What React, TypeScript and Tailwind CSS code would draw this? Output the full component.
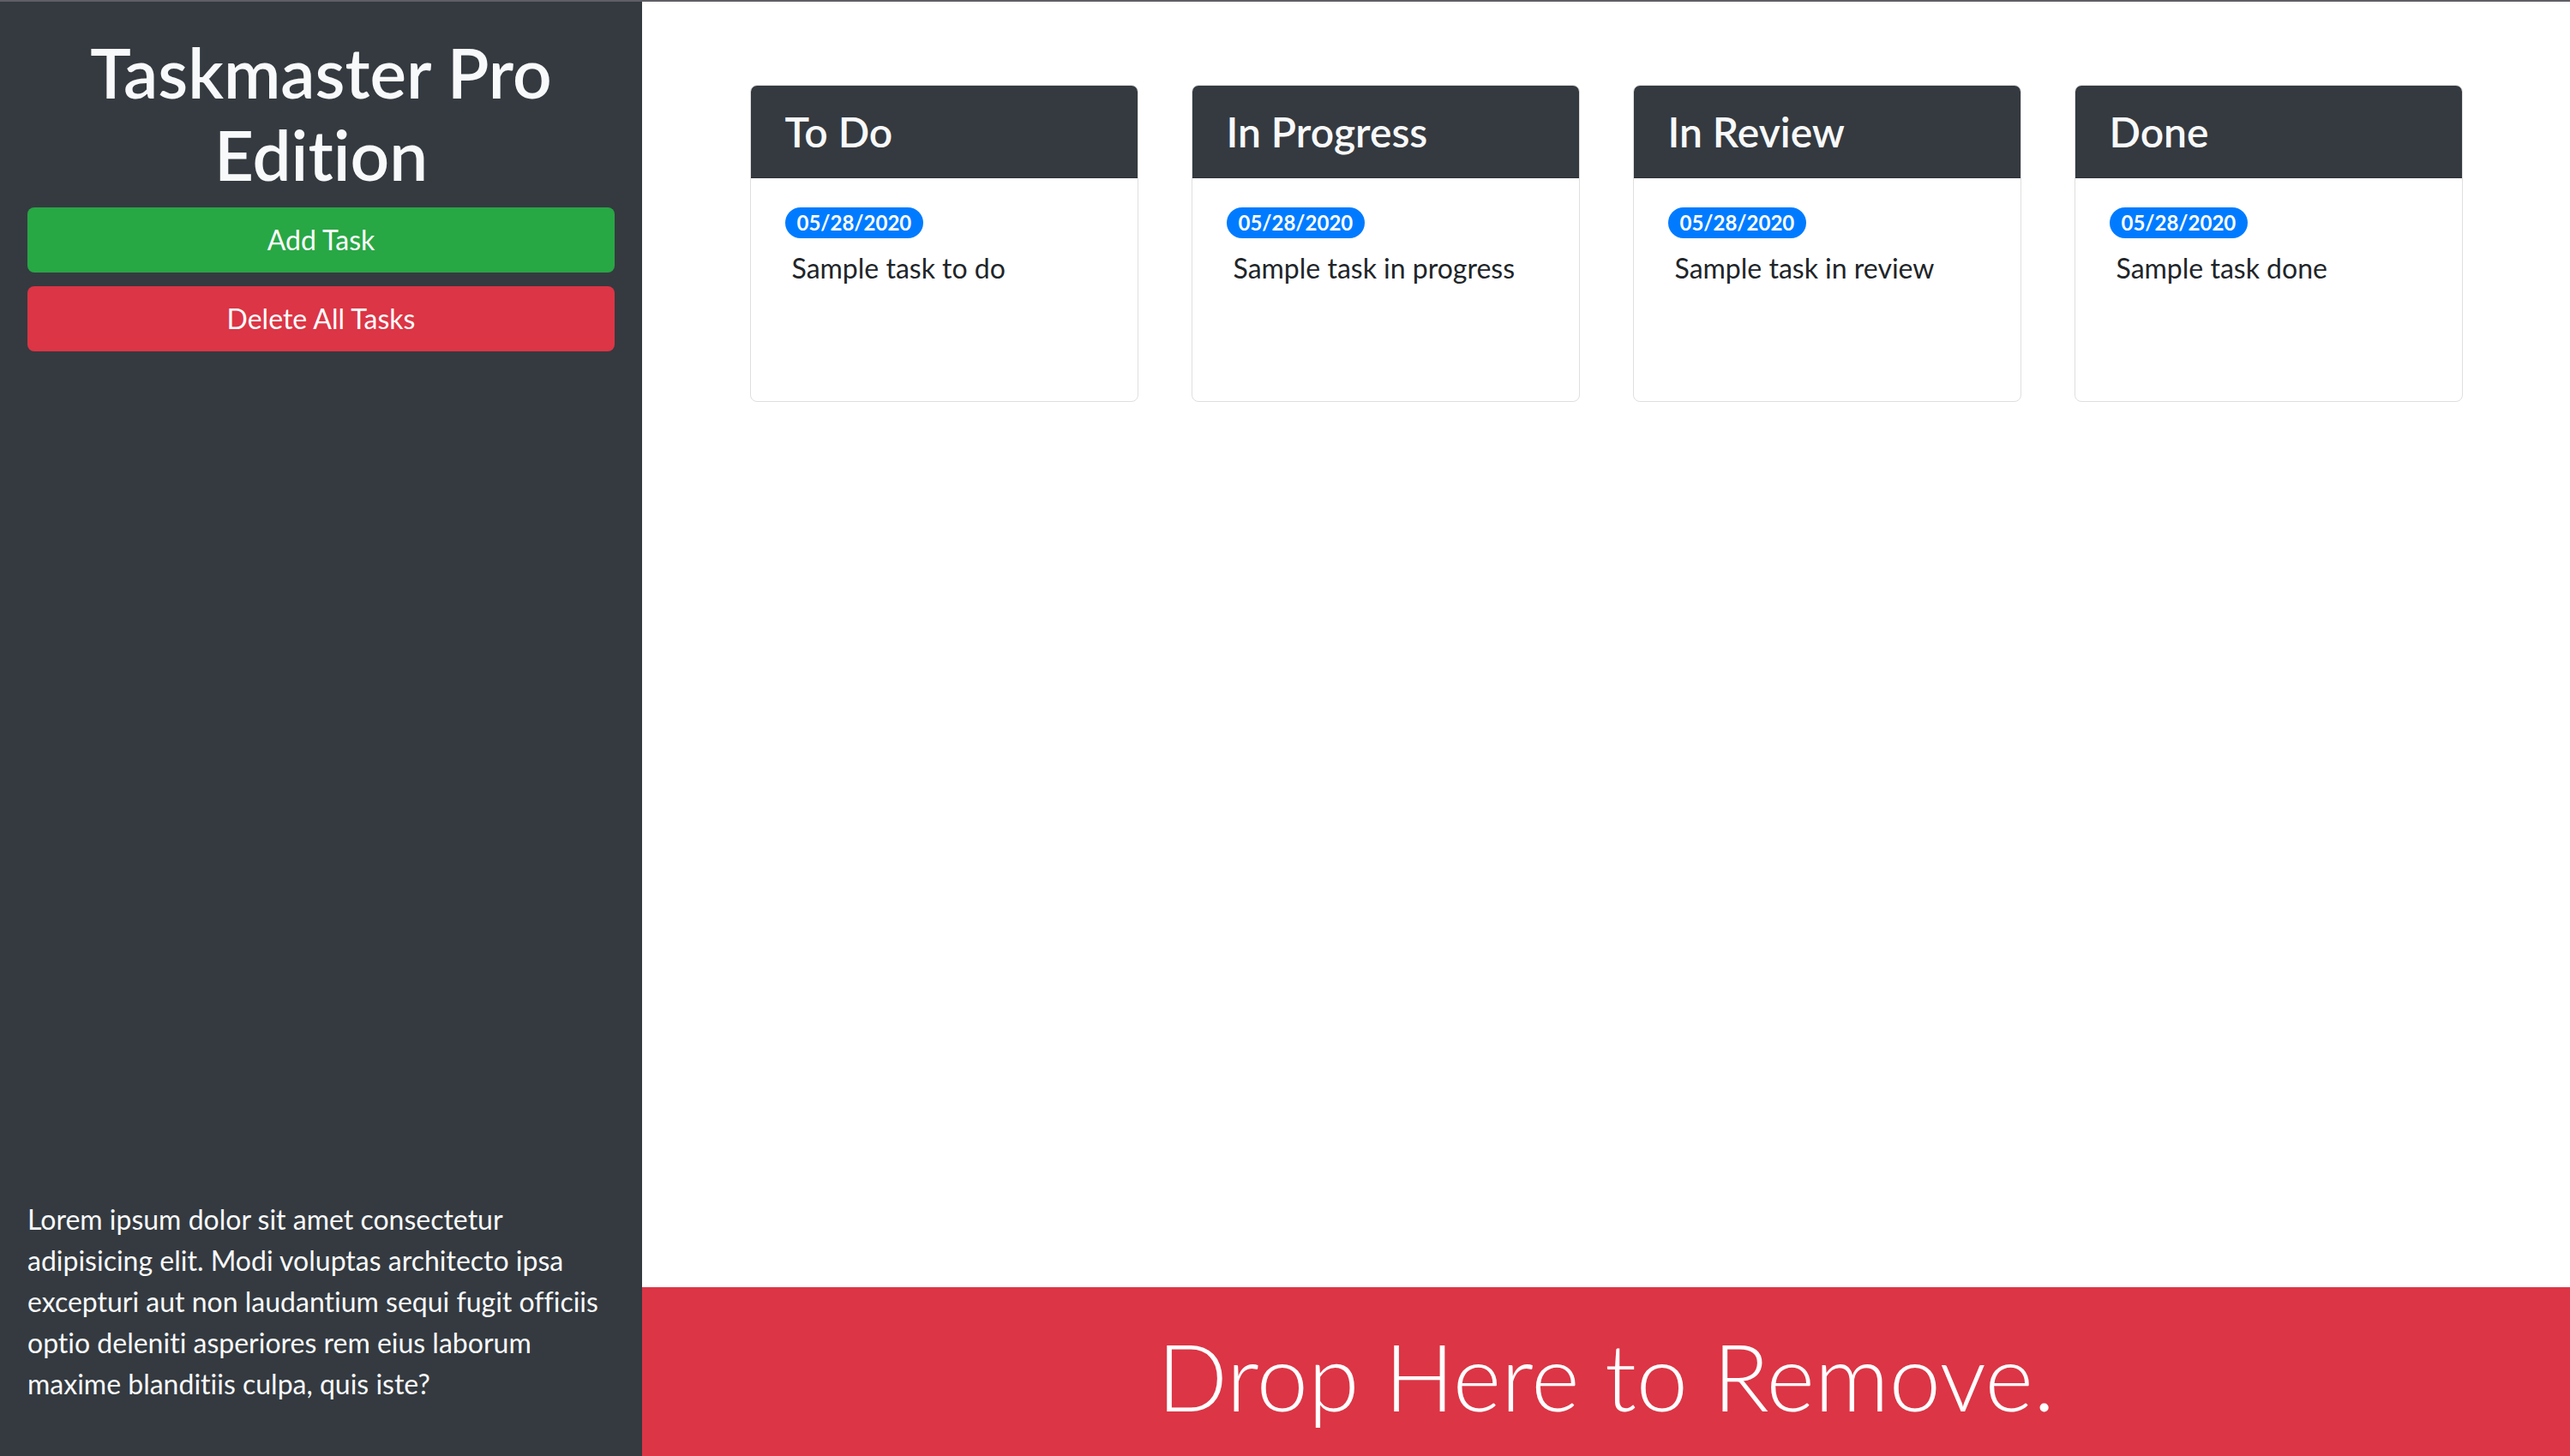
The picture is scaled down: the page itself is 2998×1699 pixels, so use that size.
import * as React from 'react';

type Column = {
  id: string;
  title: string;
  tasks: { id: number; date: string; text: string }[];
};

const columns: Column[] = [
  { id: 'todo', title: 'To Do', tasks: [{ id: 1, date: '05/28/2020', text: 'Sample task to do' }] },
  { id: 'progress', title: 'In Progress', tasks: [{ id: 2, date: '05/28/2020', text: 'Sample task in progress' }] },
  { id: 'review', title: 'In Review', tasks: [{ id: 3, date: '05/28/2020', text: 'Sample task in review' }] },
  { id: 'done', title: 'Done', tasks: [{ id: 4, date: '05/28/2020', text: 'Sample task done' }] },
];

const font = "font-['Lato','Open_Sans',sans-serif] [font-variant-ligatures:none]";

const TaskColumn: React.FC<{ column: Column }> = ({ column }) => (
  <div className="w-[453px] h-[370px] flex flex-col bg-white border border-[#dfdfdf] rounded-[8px] overflow-hidden">
    {/* Column header */}
    <div className="h-[108px] flex items-center px-[40px] bg-[#343a40] border-b border-[#2d3237]">
      <h4 className="text-[48px] leading-[1.2] font-semibold text-[#f8f9fa]">{column.title}</h4>
    </div>
    <div className="flex-1 px-[40px] pt-[34px]">
      {column.tasks.map(task => (
        <div key={task.id} className="flex flex-col items-start">
          <span className="h-[36px] px-[14px] flex items-center rounded-full bg-[#007bff] text-white text-[24px] font-bold leading-none">
            {task.date}
          </span>
          <p className="mt-[11px] pl-[8px] text-[32px] leading-[48px] text-[#212529]">{task.text}</p>
        </div>
      ))}
    </div>
  </div>
);

const App: React.FC = () => {
  return (
    <div className={`h-screen w-full flex border-t-2 border-[#5f5f66] overflow-hidden ${font}`}>
      {/* Sidebar */}
      <aside className="w-[749px] flex-shrink-0 flex flex-col bg-[#343a40] px-[32px] pt-[34px] pb-[60px]">
        <h1 className="text-center text-[80px] leading-[1.2] font-semibold text-[#f8f9fa]">Taskmaster Pro Edition</h1>
        <div className="mt-[14px] flex flex-col gap-[16px]">
          <button className="h-[76px] w-full rounded-[8px] bg-[#28a745] text-white text-[32px] leading-[48px]">Add Task</button>
          <button className="h-[76px] w-full rounded-[8px] bg-[#dc3545] text-white text-[32px] leading-[48px]">Delete All Tasks</button>
        </div>
        <div className="flex-grow" />
        <p className="text-[32px] leading-[48px] text-[#f8f9fa]">
          Lorem ipsum dolor sit amet consectetur adipisicing elit. Modi voluptas architecto ipsa excepturi aut non laudantium sequi fugit officiis optio deleniti asperiores rem eius laborum maxime blanditiis culpa, quis iste?
        </p>
      </aside>

      {/* Board */}
      <main className="flex-1 flex flex-col bg-white">
        <div className="flex-1 flex justify-center gap-[62px] pt-[97px]">
          {columns.map(col => (
            <TaskColumn key={col.id} column={col} />
          ))}
        </div>
        <div className="h-[197px] flex items-center justify-center pt-[10px] bg-[#dc3545]">
          <h2 className="text-[108px] leading-[1.2] font-light text-white">Drop Here to Remove.</h2>
        </div>
      </main>
    </div>
  );
};

export default App;
